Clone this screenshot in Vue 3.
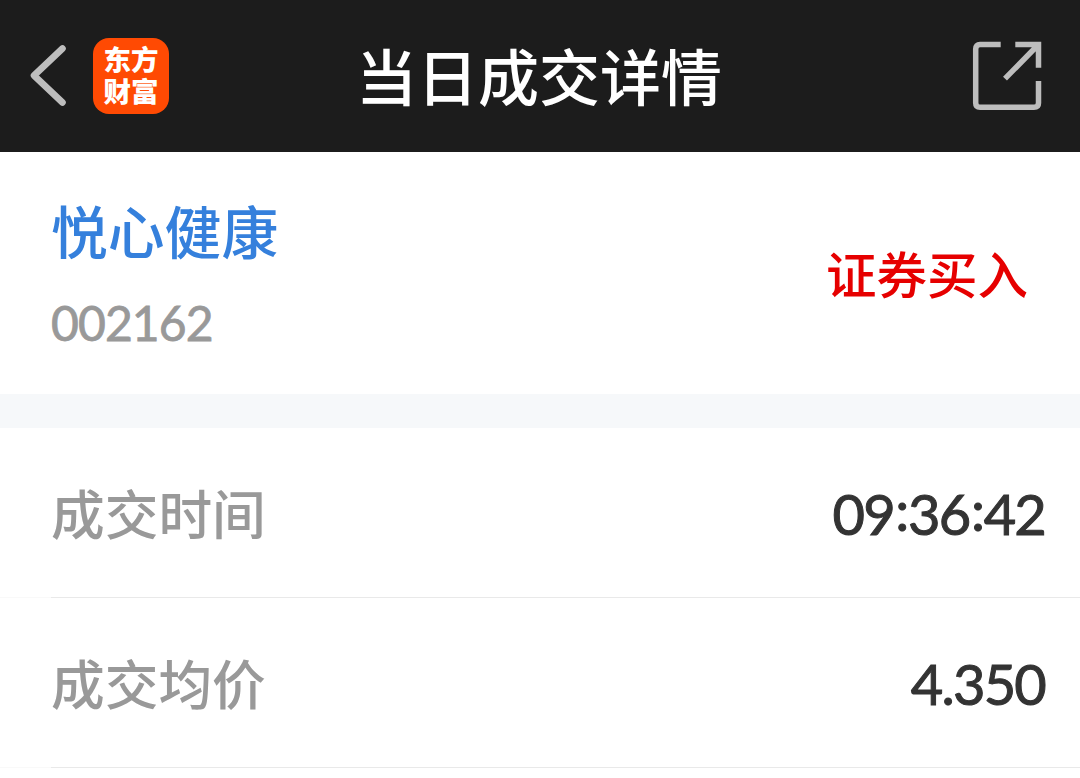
<template>
    <div class="page">
        <header class="nav-bar">
            <div class="nav-left">
                <svg class="back" viewBox="0 0 40 66">
                    <path d="M33.5 5.500 L5 32.500 L33.500 59.500" />
                </svg>
                <div class="logo">东方<br>财富</div>
            </div>
            <h1 class="title">当日成交详情</h1>
            <svg class="share" viewBox="0 0 72 72">
                <path d="M29.7 4.500 H9 Q4.700 4.500 4.700 9 V63 Q4.700 67.300 9 67.300 H63 Q67.500 67.300 67.500 63 V41" />
                <path d="M44.300 4.500 H67.500 V27.700 M66.500 5.500 L34 38.700" />
            </svg>
        </header>

        <section class="stock">
            <div>
                <div class="stock-name">悦心健康</div>
                <div class="stock-code">002162</div>
            </div>
            <div class="trade-type">证券买入</div>
        </section>

        <section class="list">
            <div v-for="item in details" :key="item.label" class="row">
                <span class="label">{{ item.label }}</span>
                <span class="value">
                    <span
                        v-for="(part, index) in splitValue(item.value)"
                        :key="index"
                        :class="{ colon: part === ':' }"
                    >{{ part }}</span>
                </span>
            </div>
        </section>
    </div>
</template>

<script setup>
// 成交明细
const details = [
    { label: '成交时间', value: '09:36:42' },
    { label: '成交均价', value: '4.350' }
]

// 拆出冒号，单独调整位置
const splitValue = (value) => value.split(/(:)/)
</script>

<style>
body {
    margin: 0;
    background: #fff;
}
</style>

<style scoped>
.page {
    height: 778px;
    overflow: hidden;
    background: #fff;
    font-family: 'Noto Sans CJK SC', sans-serif;
}

.nav-bar {
    display: grid;
    grid-template-columns: 1fr auto 1fr;
    align-items: center;
    height: 152px;
    padding: 0 37px;
    box-sizing: border-box;
    background: #1c1c1c;
}

.nav-left {
    display: flex;
    align-items: center;
    gap: 24px;
    margin-left: -8px;
}

.back,
.share {
    fill: none;
    stroke: #bdbdbd;
}

.back {
    width: 40px;
    height: 66px;
    stroke-width: 6.6;
    stroke-linecap: round;
    stroke-linejoin: round;
}

.logo {
    width: 76px;
    height: 76px;
    padding-top: 4px;
    margin-top: -1px;
    box-sizing: border-box;
    border-radius: 16px;
    background: #ff4a03;
    color: #fff;
    font-size: 27.5px;
    font-weight: 900;
    line-height: 32.5px;
    text-align: center;
}

.title {
    margin: 0 2px 3px 0;
    color: #fff;
    font-size: 61px;
    font-weight: 500;
    line-height: 80px;
}

.share {
    justify-self: end;
    width: 72px;
    height: 72px;
    stroke-width: 5.5;
}

.stock {
    display: flex;
    align-items: center;
    justify-content: space-between;
    height: 242px;
    padding: 0 52px 0 51px;
    box-sizing: border-box;
}

.stock-name {
    padding-top: 16px;
    color: #3580dc;
    font-size: 56.8px;
    font-weight: 500;
    line-height: 84px;
}

.stock-code {
    color: #999;
    font-family: Lato, sans-serif;
    font-size: 48px;
    line-height: 104px;
    letter-spacing: -0.9px;
    -webkit-text-stroke: 0.8px #999;
}

.trade-type {
    padding-bottom: 3px;
    color: #e60000;
    font-size: 50.5px;
    font-weight: 500;
}

.list {
    border-top: 34px solid #f6f8fa;
}

.row {
    display: flex;
    align-items: center;
    justify-content: space-between;
    height: 170px;
    padding: 0 35px 0 51px;
    box-sizing: border-box;
    border-bottom: 1px solid;
    /* 左侧缩进部分的分割线更浅 */
    border-image: linear-gradient(to right, #f9f9f9 52px, #e9e9e9 52px) 1;
}

.label {
    padding-bottom: 2px;
    color: #999;
    font-size: 53.7px;
    font-weight: 500;
}

.value {
    display: flex;
    padding-top: 2px;
    color: #333;
    font-family: Lato, sans-serif;
    font-size: 56px;
    letter-spacing: -1.8px;
    -webkit-text-stroke: 1px #333;
}

/* 冒号与数字垂直居中 */
.colon {
    margin: -4px 0.5px 0 1.5px;
}
</style>
